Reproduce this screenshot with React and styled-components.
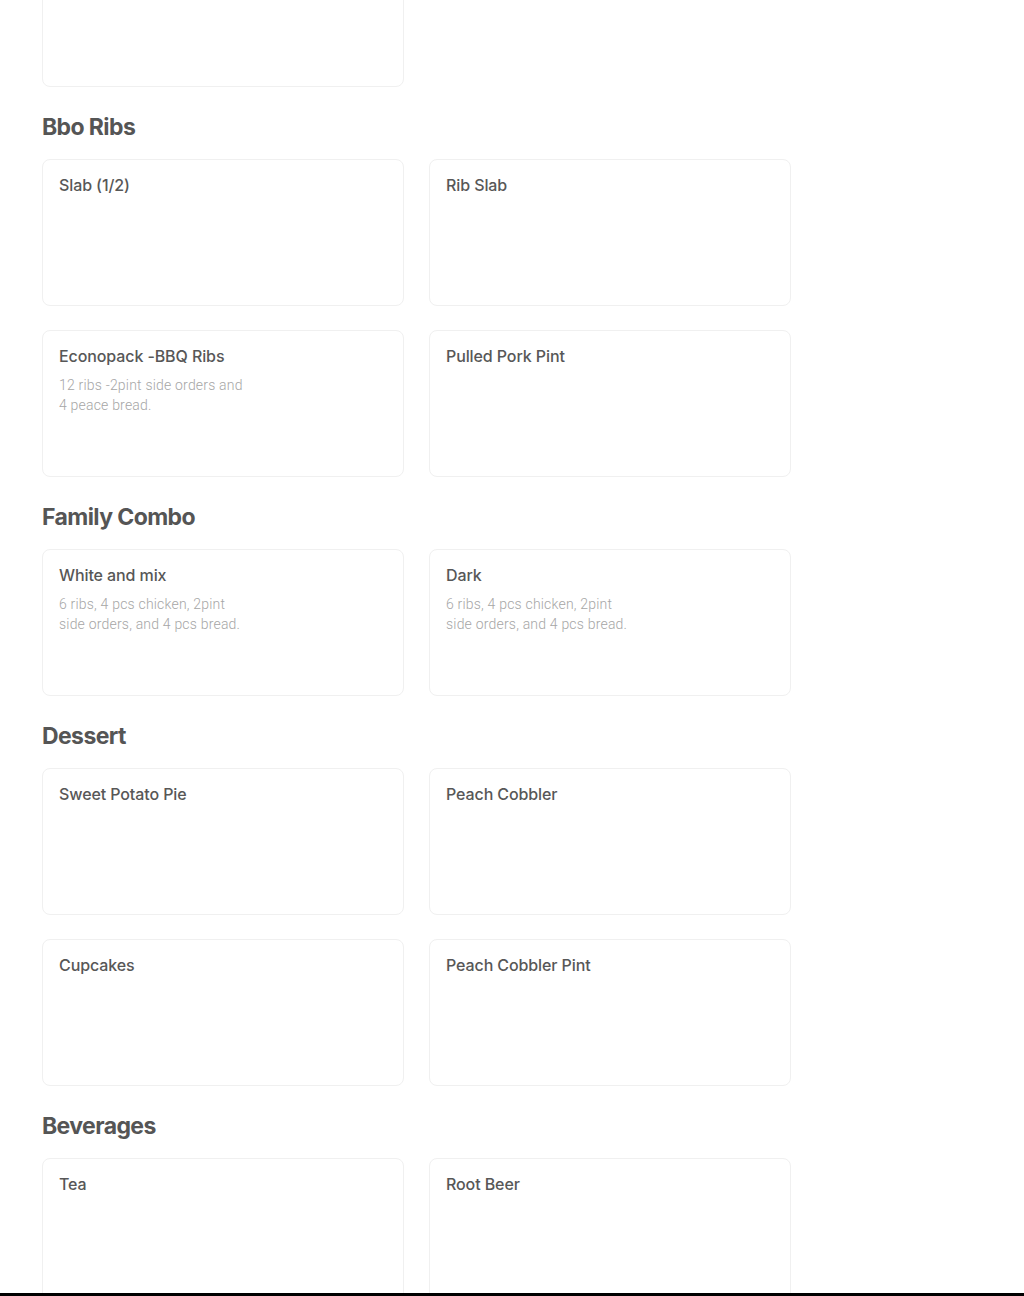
import React from "react";
import styled, { createGlobalStyle } from "styled-components";

const menu = [
  {
    title: null,
    items: [{ name: null }],
  },
  {
    title: "Bbo Ribs",
    items: [
      { name: "Slab (1/2)" },
      { name: "Rib Slab" },
      { name: "Econopack -BBQ Ribs", desc: "12 ribs -2pint side orders and 4 peace bread." },
      { name: "Pulled Pork Pint" },
    ],
  },
  {
    title: "Family Combo",
    items: [
      { name: "White and mix", desc: "6 ribs, 4 pcs chicken, 2pint side orders, and 4 pcs bread." },
      { name: "Dark", desc: "6 ribs, 4 pcs chicken, 2pint side orders, and 4 pcs bread." },
    ],
  },
  {
    title: "Dessert",
    items: [
      { name: "Sweet Potato Pie" },
      { name: "Peach Cobbler" },
      { name: "Cupcakes" },
      { name: "Peach Cobbler Pint" },
    ],
  },
  {
    title: "Beverages",
    items: [{ name: "Tea" }, { name: "Root Beer" }],
  },
];

export default function App() {
  return (
    <>
      <GlobalStyle />
      <Viewport>
        <Scroller>
          <Content>
            {menu.map((section, i) => (
              <Section key={i}>
                {section.title && <Heading>{section.title}</Heading>}
                <Grid>
                  {section.items.map((item, j) => (
                    <Card key={j}>
                      {item.name && <ItemName>{item.name}</ItemName>}
                      {item.desc && <ItemDesc>{item.desc}</ItemDesc>}
                    </Card>
                  ))}
                </Grid>
              </Section>
            ))}
          </Content>
        </Scroller>
        <Footer />
      </Viewport>
    </>
  );
}

const GlobalStyle = createGlobalStyle`
  html, body {
    margin: 0;
    padding: 0;
    background: #fff;
  }
  body {
    font-family: Inter, "Liberation Sans", sans-serif;
  }
`;

const Viewport = styled.div`
  width: 1024px;
  height: 1296px;
  display: flex;
  flex-direction: column;
  overflow: hidden;
`;

const Scroller = styled.div`
  flex: 1;
  overflow: hidden;
`;

const Content = styled.div`
  margin-top: -60px;
  padding: 0 42px;
  display: flex;
  flex-direction: column;
`;

const Section = styled.section`
  display: flex;
  flex-direction: column;
`;

const Heading = styled.h2`
  margin: 24px 0 16px;
  font-family: Inter, "Liberation Sans", sans-serif;
  font-size: 23px;
  line-height: 32px;
  font-weight: 700;
  letter-spacing: -0.6px;
  color: #555555;
`;

const Grid = styled.div`
  display: grid;
  grid-template-columns: 362px 362px;
  column-gap: 25px;
  row-gap: 24px;
`;

const Card = styled.div`
  box-sizing: border-box;
  height: 147px;
  padding: 15px 16px 16px 16px;
  border: 1px solid #f0f0f0;
  border-radius: 8px;
  background: #fff;
`;

const ItemName = styled.div`
  font-size: 16px;
  line-height: 20px;
  font-weight: 500;
  letter-spacing: -0.1px;
  color: #575757;
`;

const ItemDesc = styled.div`
  margin-top: 9px;
  max-width: 190px;
  font-family: Roboto, "Liberation Sans", sans-serif;
  font-size: 14px;
  line-height: 20px;
  font-weight: 300;
  letter-spacing: 0.2px;
  color: #a6a6a6;
`;

const Footer = styled.div`
  height: 3px;
  background: #000;
`;
